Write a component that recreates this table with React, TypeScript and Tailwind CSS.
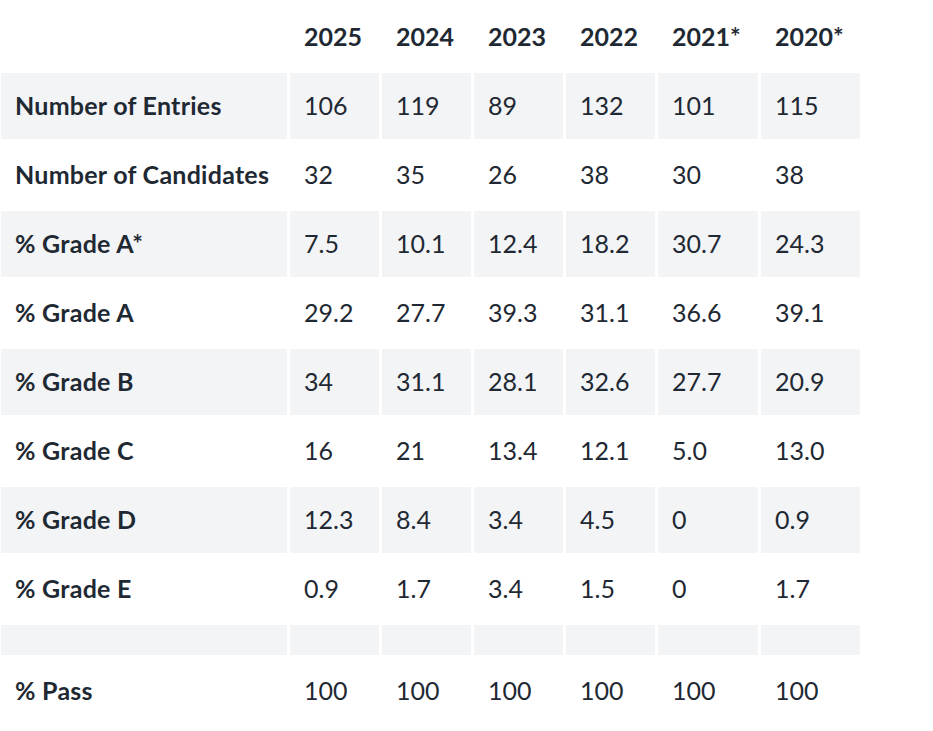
import React from "react";

const years = ["2025", "2024", "2023", "2022", "2021*", "2020*"];

const rows: { label: string; values: string[] }[] = [
  { label: "Number of Entries", values: ["106", "119", "89", "132", "101", "115"] },
  { label: "Number of Candidates", values: ["32", "35", "26", "38", "30", "38"] },
  { label: "% Grade A*", values: ["7.5", "10.1", "12.4", "18.2", "30.7", "24.3"] },
  { label: "% Grade A", values: ["29.2", "27.7", "39.3", "31.1", "36.6", "39.1"] },
  { label: "% Grade B", values: ["34", "31.1", "28.1", "32.6", "27.7", "20.9"] },
  { label: "% Grade C", values: ["16", "21", "13.4", "12.1", "5.0", "13.0"] },
  { label: "% Grade D", values: ["12.3", "8.4", "3.4", "4.5", "0", "0.9"] },
  { label: "% Grade E", values: ["0.9", "1.7", "3.4", "1.5", "0", "1.7"] },
];

const App: React.FC = () => {
  return (
    <div
      className="min-h-screen bg-white pt-[3px] pl-px text-[#1f2933]"
      style={{ fontFamily: "Lato, 'Noto Sans', sans-serif" }}
    >
      <div className="grid w-fit grid-cols-[286px_89px_89px_89px_89px_100px_99px] grid-rows-[67px_repeat(8,66px)_30px_66px] gap-[3px] text-[25px]">
        {/* Header */}
        <div />
        {years.map((y) => (
          <div key={y} className="flex items-center px-[14px] font-bold">
            {y}
          </div>
        ))}

        {/* Body rows, every other one shaded */}
        {rows.map((row, i) => {
          const shade = i % 2 === 0 ? "bg-[#f3f4f6]" : "";
          return (
            <React.Fragment key={row.label}>
              <div
                className={`flex items-center px-[14px] font-bold whitespace-nowrap tracking-[0.01em] ${shade}`}
              >
                {row.label}
              </div>
              {row.values.map((v, j) => (
                <div key={j} className={`flex items-center px-[14px] ${shade}`}>
                  {v}
                </div>
              ))}
            </React.Fragment>
          );
        })}

        {/* Spacer row */}
        {Array.from({ length: 7 }).map((_, j) => (
          <div key={j} className="bg-[#f3f4f6]" />
        ))}

        {/* Pass row */}
        <div className="flex items-center px-[14px] font-bold tracking-[0.01em]">% Pass</div>
        {years.map((y) => (
          <div key={y} className="flex items-center px-[14px]">
            100
          </div>
        ))}
      </div>
    </div>
  );
};

export default App;
